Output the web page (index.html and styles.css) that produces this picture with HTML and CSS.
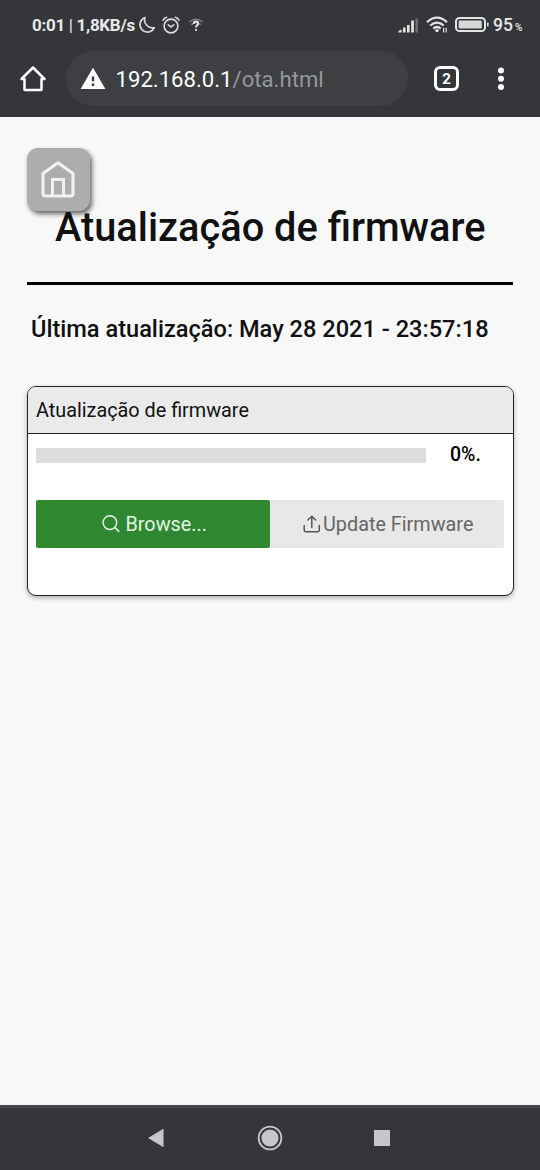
FILE: index.html
```html
<!DOCTYPE html>
<html lang="pt">
<head>
<meta charset="utf-8">
<title>Atualização de firmware</title>
<link rel="stylesheet" href="styles.css">
</head>
<body>
<header class="chrome">
  <div class="status">
    <span class="clock">0:01 <i class="sep">|</i> 1,8KB/s</span>
    <svg class="moon" width="18" height="18" viewBox="0 0 18 18" fill="none" stroke="#dcdcdd" stroke-width="1.600" stroke-linejoin="round"><path d="M7 1.500A7.500 7.500 0 1 0 16.300 11.700A8 8 0 0 1 7 1.500Z"/></svg>
    <svg class="alarm" width="18" height="18" viewBox="0 0 18 18" fill="none" stroke="#dcdcdd" stroke-width="1.600" stroke-linecap="round"><circle cx="9" cy="10" r="6.900"/><path d="M6.300 8.800L9 11l2.700-2.200M1 4.200Q2 1.800 4.600 1.200M17 4.200Q16 1.800 13.400 1.200"/></svg>
    <svg class="unknown" width="16" height="16" viewBox="0 0 16 16"><path d="M1 5.200Q8 -.8 15 5.200M3.300 7.600Q8 3.800 12.700 7.600" fill="none" stroke="#7c7d80" stroke-width="1.500"/><path d="M5.700 6.700Q5.800 4.500 8 4.500T10.200 6.500Q10.200 7.600 8.900 8.500Q8 9.200 8 10.400M8 12v1.800" fill="none" stroke="#e8e8e8" stroke-width="1.900"/></svg>
    <div class="system">
      <svg class="signal" width="21" height="16" viewBox="0 0 21 16" fill="#e4e4e5"><path d="M0 15.500q.3-2.300 3.600-2.700v2.700Z"/><rect x="5" y="10.500" width="2.600" height="5"/><rect x="9" y="8" width="2.600" height="7.500"/><rect x="13.200" y="3.500" width="2.700" height="12"/><rect x="17.500" y="1.500" width="2.300" height="14" fill="#737477"/></svg>
      <svg class="wifi" width="23" height="18" viewBox="0 0 23 18" fill="none" stroke="#e4e4e5" stroke-width="2.200"><path d="M1 6.200Q11 -2.800 21 6.200M4.200 9.500Q11 3.700 17.800 9.500M7.300 12.600Q11 9.400 14.700 12.600"/><circle cx="11" cy="14.600" r="1.700" fill="#e4e4e5" stroke="none"/><path d="M17.600 16.500v-4.800M20.200 11.800v4.800" stroke-width="1.200"/></svg>
      <svg class="battery" width="35" height="16" viewBox="0 0 35 16"><rect x="1" y="1" width="29" height="13" rx="3.600" fill="none" stroke="#e4e4e5" stroke-width="2"/><rect x="3.600" y="3.500" width="23.200" height="8" rx="1.200" fill="#d8d8d9"/><rect x="32" y="5.500" width="1.600" height="4" rx=".7" fill="#e4e4e5"/></svg>
      <span class="level">95</span><span class="percent">%</span>
    </div>
  </div>
  <div class="toolbar">
    <svg class="home" width="28" height="28" viewBox="0 0 28 28" fill="none" stroke="#fff" stroke-width="2.500" stroke-linejoin="round" stroke-linecap="round"><path d="M5.500 14v10.500q0 .6.600.6h15.800q.6 0 .6-.6V14h3L14 2.500 2.500 14Z"/></svg>
    <div class="address">
      <svg width="26" height="22" viewBox="0 0 26 22"><path d="M13 -.3L25.400 21.100H.6Z" fill="#fff"/><path d="M13 8.400v4.800M13 15.400v2.600" stroke="#3c4043" stroke-width="2.500"/></svg>
      <span class="url">192.168.0.1<span class="path">/ota.html</span></span>
    </div>
    <span class="tabs">2</span>
    <svg class="more" width="8" height="26" viewBox="0 0 8 26" fill="#fff"><circle cx="4" cy="4.400" r="3"/><circle cx="4" cy="12.800" r="3"/><circle cx="4" cy="21.100" r="3"/></svg>
  </div>
</header>
<main class="page">
  <a class="home-button"><svg width="36" height="40" viewBox="0 0 36 40" fill="none" stroke="#f1f1f1" stroke-width="3.200" stroke-linejoin="round"><path d="M3 13.500L18 2.800 33 13.500V33.500q0 2.500-2.500 2.500h-25Q3 36 3 33.500Z"/><path d="M12.500 36V19.500h11V36" stroke-width="3" stroke-linejoin="miter"/></svg></a>
  <h1 class="title">Atualização de firmware</h1>
  <hr class="rule">
  <h2 class="updated">Última atualização: May 28 2021 - 23:57:18</h2>
  <section class="card">
    <div class="card-head"><span>Atualização de firmware</span></div>
    <div class="progress"><div class="track"></div><span class="value">0%.</span></div>
    <div class="actions">
      <button class="btn browse"><svg width="18" height="18" viewBox="0 0 18 18" fill="none" stroke="currentColor" stroke-width="1.500" stroke-linecap="round"><circle cx="7.900" cy="7.600" r="6.800"/><path d="M12.800 12.400l4 4"/></svg><span>Browse...</span></button>
      <button class="btn update"><svg width="18" height="18" viewBox="0 0 18 18" fill="none" stroke="currentColor" stroke-width="1.500" stroke-linecap="round" stroke-linejoin="round"><path d="M1.200 10.500v4.800q0 1.400 1.400 1.400h12.300q1.400 0 1.400-1.400v-4.800M8.800 12.500V1.400M4.900 5L8.800 1.200 12.700 5"/></svg><span>Update Firmware</span></button>
    </div>
  </section>
</main>
<nav class="navbar">
  <svg width="16" height="20" viewBox="0 0 16 20"><path d="M0 10L15.500 .7V19.300Z" fill="#c6c7c8"/></svg>
  <svg width="26" height="26" viewBox="0 0 26 26"><circle cx="13" cy="13" r="11.400" fill="none" stroke="#c6c7c8" stroke-width="1.800"/><circle cx="13" cy="13" r="8.600" fill="#c6c7c8"/></svg>
  <svg width="16" height="16" viewBox="0 0 16 16"><path d="M0 0h16v16H0Z" fill="#c6c7c8"/></svg>
</nav>
</body>
</html>
```
FILE: styles.css
```css
* { box-sizing: border-box; }
body { margin: 0; height: 1170px; display: flex; flex-direction: column; background: #f8f8f8; font-family: Roboto, sans-serif; color: #111; }
svg { display: block; flex: none; }
span { white-space: nowrap; }
.chrome { height: 117px; background: #35363a; color: #e8e8e9; }
.status { height: 51px; display: flex; align-items: center; padding: 0 17px 2px 32px; }
.clock { font-size: 17px; font-weight: 700; letter-spacing: -.3px; width: 106px; }
.sep { font-style: normal; font-weight: 400; }
.alarm { margin-left: 6px; }
.unknown { margin-left: 8px; }
.system { margin-left: auto; display: flex; align-items: center; }
.wifi { margin-left: 7px; }
.battery { margin-left: 6px; }
.level { width: 22px; margin-left: 3px; font-size: 17.500px; font-weight: 500; }
.percent { width: 8px; font-size: 10px; font-weight: 500; padding-top: 6px; }
.toolbar { height: 55px; display: flex; align-items: center; padding-left: 19px; }
.address { width: 342px; height: 55px; margin-left: 19px; padding-left: 14px; display: flex; align-items: center; border-radius: 28px; background: #3d3f43; }
.url { margin-left: 9.500px; padding-top: 1px; font-size: 22.150px; color: #fff; }
.path { color: #96989b; }
.tabs { width: 25px; height: 25px; margin-left: 26px; border: 3px solid #fff; border-radius: 6px; font-size: 15px; font-weight: 700; line-height: 20px; text-align: center; color: #fff; }
.more { margin-left: 38px; }
.page { position: relative; flex: 1; padding: 87px 27px 0; }
.home-button { position: absolute; left: 27px; top: 31px; width: 63px; height: 63px; border-radius: 11px; background: #adadad; box-shadow: 2px 3px 5px rgba(0,0,0,.6); padding: 12px 0 0 13px; }
.title { position: relative; margin: 0 0 0 28px; height: 78px; font-size: 39.750px; font-weight: 500; line-height: 48px; white-space: nowrap; }
.rule { margin: 0; height: 3px; border: 0; background: #000; }
.updated { margin: 31px 0 0 4px; height: 26px; font-size: 23.600px; font-weight: 500; line-height: 26px; white-space: nowrap; }
.card { margin-top: 44px; margin-right: -.5px; height: 210px; border: 1px solid #222; border-radius: 9px; background: #fff; box-shadow: 0 2px 5px rgba(0,0,0,.3); overflow: hidden; }
.card-head { height: 47px; padding: 11px 8px; border-bottom: 1px solid #222; background: #eaeaea; font-size: 19.820px; line-height: 25px; }
.progress { display: flex; padding: 9px 8px 0; height: 66px; color: #000; }
.track { width: 390px; height: 15px; margin-top: 5px; background: #dcdcdc; }
.value { margin-left: 24px; font-size: 19.500px; font-weight: 500; line-height: 23px; }
.actions { display: flex; height: 48px; padding-left: 8px; }
.btn { display: flex; align-items: center; border: 0; padding: 0; font: 400 19.820px Roboto, sans-serif; border-radius: 2px; }
.browse { width: 234px; padding-left: 65.500px; background: #2f8831; color: #e4f5e4; }
.browse span { margin-left: 6px; }
.update { width: 234px; padding-left: 33px; background: #e8e8e8; color: #555; }
.update span { margin-left: 2px; color: #666; }
.navbar { height: 65px; border-top: 3px solid #46474b; background: #35363a; display: flex; align-items: center; padding: 0 0 2px 148px; }
.navbar svg + svg { margin-left: 93px; }
.navbar svg:last-child { margin-left: 91px; }
```
